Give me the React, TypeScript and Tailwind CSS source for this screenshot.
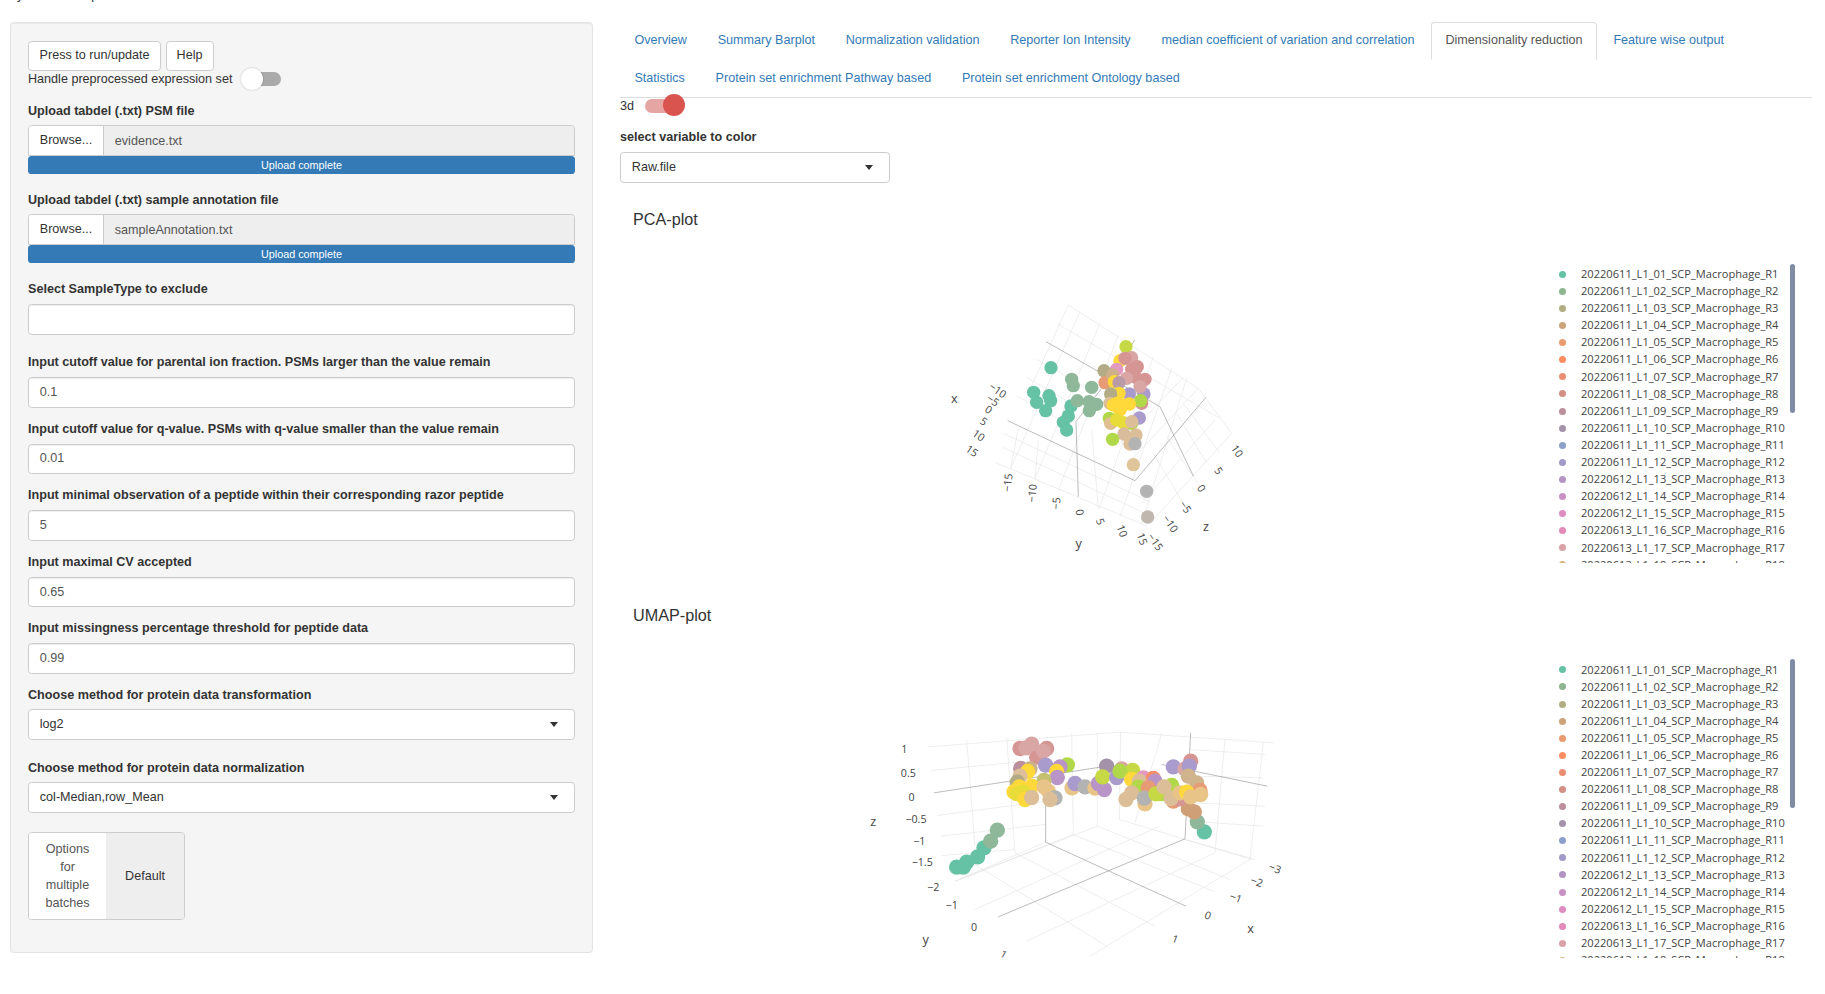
import React from "react";

type P = [number, number, string];
type L = [number, number, number, number];
type T = [number, number, string, number?];

const sans = "[font-family:'Liberation_Sans',Arial,sans-serif]";

const tabsA = ["Overview", "Summary Barplot", "Normalization validation", "Reporter Ion Intensity", "median coefficient of variation and correlation", "Dimensionality reduction", "Feature wise output"];
const tabsB = ["Statistics", "Protein set enrichment Pathway based", "Protein set enrichment Ontology based"];

const legendColors = ["#66c2a5", "#8db58f", "#b0ad82", "#cda37a", "#e99a6e", "#fc8d62", "#ea8d73", "#d38e85", "#bb8f9b", "#a492ab", "#8da0cb", "#a19ac7", "#b395c3", "#c991c3", "#df8dc1", "#e38ab8", "#dba1a8", "#d4b47d"];
const legendNames = legendColors.map((_, i) => {
  const n = i + 1;
  const d = n <= 12 ? "20220611" : n <= 15 ? "20220612" : "20220613";
  return `${d}_L1_${String(n).padStart(2, "0")}_SCP_Macrophage_R${n}`;
});

const T1 = "#66c2a5", G1 = "#8fb79a", K1 = "#b3ab86", O1 = "#e79b75", Y = "#ffd83a", Y2 = "#e8dc38", R = "#d59693", R2 = "#d9a5a5", V = "#a99bcc", V2 = "#b895c6", LG = "#b0d848", LG2 = "#c6d945", B = "#dcbf98", GR = "#b3b3b3", M = "#e39ac0", H = "#e8c488";

const pcaPoints: P[] = [
  [393, 233, T1], [341, 307, T1], [350, 337, T1], [387, 317, T1], [392, 332, T1], [377, 362, T1], [453, 348, T1], [445, 378, T1], [430, 397, T1], [440, 420, T1],
  [455, 268, G1], [460, 287, G1], [515, 292, G1], [472, 332, G1], [507, 335, G1], [530, 343, G1], [508, 362, G1],
  [618, 170, LG2], [600, 212, Y], [635, 203, R2], [615, 205, R], [590, 238, M], [552, 242, K1], [555, 278, O1], [578, 255, "#ccb08c"], [652, 230, R], [635, 238, R], [675, 268, R], [647, 262, R], [583, 275, Y], [620, 265, R2], [597, 278, "#b99ba8"], [672, 312, V], [660, 290, R2], [665, 340, R], [628, 312, V], [662, 332, LG], [597, 310, Y], [572, 312, K1], [570, 340, B],
  [658, 384, V], [568, 385, LG], [635, 400, LG], [590, 340, Y], [610, 345, Y], [628, 342, Y], [600, 360, Y], [580, 345, Y], [572, 400, "#e0c090"], [590, 390, Y2], [610, 398, Y2], [635, 395, B],
  [612, 432, "#d9bc9c"], [648, 435, B], [578, 448, LG], [630, 462, B], [645, 461, GR], [640, 524, "#e0c49a"], [680, 604, GR], [683, 681, "#c0b8ae"],
];

const pcaGrid: L[] = [
  [445, 45, 835, 295], [410, 100, 900, 385], [350, 208, 540, 318], [320, 262, 470, 350], [290, 318, 450, 405], [250, 430, 690, 635], [248, 472, 665, 665], [225, 517, 680, 708],
  [480, 65, 272, 535], [540, 100, 345, 565], [595, 135, 415, 600], [700, 200, 538, 655], [755, 235, 600, 680], [800, 265, 665, 700], [445, 45, 320, 320],
  [835, 295, 935, 430], [690, 700, 935, 430], [665, 640, 885, 390], [625, 520, 835, 295], [590, 470, 790, 262], [770, 370, 860, 520], [790, 340, 900, 490], [740, 440, 840, 590], [700, 490, 790, 640],
  [515, 420, 535, 655], [355, 450, 345, 565], [295, 415, 272, 535],
];

const pcaDark: L[] = [[378, 155, 720, 350], [263, 392, 645, 572], [645, 572, 858, 322], [720, 350, 820, 558], [468, 395, 475, 620], [468, 395, 545, 295], [644, 150, 620, 190]];

const pcaText: T[] = [
  [232, 312, "−10", 35], [218, 342, "−5", 35], [205, 370, "0", 35], [190, 405, "5", 35], [175, 447, "10", 35], [155, 494, "15", 35],
  [265, 588, "−15", -85], [338, 620, "−10", -85], [410, 650, "−5", -85], [478, 677, "0", 80], [540, 705, "5", 70], [605, 733, "10", 70], [665, 757, "15", 70],
  [705, 767, "−15", 55], [750, 712, "−10", 55], [795, 662, "−5", 55], [843, 606, "0", 55], [895, 553, "5", 55], [950, 494, "10", 55],
];

const umapPoints: P[] = [
  [290, 473, T1], [310, 473, T1], [320, 458, T1], [353, 442, T1], [372, 415, T1], [392, 395, G1], [412, 362, G1], [1033, 367, T1], [1012, 337, G1], [985, 298, "#cfa077"], [1003, 307, "#cfa077"],
  [480, 117, R], [530, 143, R], [498, 115, R2], [515, 104, R2], [560, 117, R], [550, 125, R2], [482, 177, "#bb8f9b"], [510, 178, "#ccb08c"], [503, 186, Y], [480, 200, B], [622, 166, LG], [600, 172, V2], [557, 167, V], [590, 186, Y], [592, 204, V2],
  [472, 218, K1], [552, 213, "#c5c070"], [515, 230, Y], [462, 247, Y], [478, 232, Y], [470, 252, Y2], [490, 248, Y2], [495, 270, Y], [515, 264, B], [552, 232, H], [565, 245, H], [585, 265, GR], [570, 270, B],
  [636, 235, H], [645, 222, V], [675, 232, GR], [705, 236, H], [715, 222, V2], [733, 240, V2], [740, 170, "#a492ab"], [728, 202, LG2], [785, 178, R2], [770, 204, V], [818, 183, LG2], [780, 185, LG], [815, 210, Y],
  [850, 205, M], [880, 207, "#fc8d62"], [838, 215, B], [885, 215, V2], [835, 233, LG], [865, 235, O1], [815, 250, B], [798, 270, B], [855, 283, H], [853, 266, GR], [940, 172, V], [935, 228, LG], [905, 252, LG], [888, 253, LG2], [912, 232, B], [940, 275, O1], [958, 268, R], [933, 267, B],
  [992, 155, R], [975, 178, R2], [988, 170, V], [985, 200, "#cfb48e"], [1010, 220, "#cfb48e"], [1020, 243, O1], [960, 250, H], [980, 248, Y], [992, 262, H], [1022, 255, H],
];

const umapGrid: L[] = [
  [205, 112, 780, 68], [780, 68, 1240, 100], [212, 183, 555, 150], [232, 318, 555, 275], [243, 380, 555, 345], [245, 438, 465, 420], [285, 515, 557, 398],
  [320, 90, 345, 410], [440, 83, 465, 430], [635, 72, 640, 375], [712, 70, 712, 350], [782, 65, 778, 330], [905, 72, 825, 340], [1095, 90, 1065, 430], [1210, 100, 1170, 450],
  [992, 120, 1215, 135], [1000, 200, 1210, 205], [1000, 280, 1215, 290], [985, 335, 1210, 350], [975, 390, 1185, 450],
  [465, 430, 885, 650], [345, 465, 740, 710], [640, 375, 1060, 545], [712, 350, 1110, 510], [778, 330, 1175, 450],
  [500, 695, 1065, 430], [690, 740, 1170, 450], [345, 600, 900, 350], [640, 375, 300, 510], [712, 350, 285, 515],
];

const umapDark: L[] = [[222, 250, 560, 198], [560, 198, 740, 170], [905, 165, 1222, 230], [557, 270, 557, 398], [557, 398, 978, 590], [975, 388, 415, 622], [975, 388, 992, 70]];

const umapText: T[] = [
  [133, 131, "1"], [145, 204, "0.5"], [155, 274, "0"], [168, 341, "−0.5"], [178, 408, "−1"], [187, 469, "−1.5"],
  [220, 546, "−2"], [275, 599, "−1"], [342, 666, "0"], [430, 746, "1", 30],
  [1245, 488, "−3", 20], [1190, 528, "−2", 20], [1127, 576, "−1", 20], [1043, 629, "0", 20], [945, 700, "1", 20],
];

function Scene({ id, dx, dy, r, clipH, grid, dark, points, text, titles }: { id: string; dx: number; dy: number; r: number; clipH: number; grid: L[]; dark: L[]; points: P[]; text: T[]; titles: [number, number, string][] }) {
  return (
    <svg width="930" height="340" viewBox="0 0 930 340" className="block shrink-0">
      <defs>
        <clipPath id={id}>
          <rect x="-300" y="-300" width="2000" height={clipH + 300} />
        </clipPath>
      </defs>
      <g transform={`translate(${dx} ${dy}) scale(0.33333)`} clipPath={`url(#${id})`}>
        {grid.map((l, i) => (
          <line key={i} x1={l[0]} y1={l[1]} x2={l[2]} y2={l[3]} stroke="#e2e2e2" strokeWidth="1.8" />
        ))}
        {dark.map((l, i) => (
          <line key={i} x1={l[0]} y1={l[1]} x2={l[2]} y2={l[3]} stroke="#777" strokeWidth="1.5" />
        ))}
        {points.map((p, i) => (
          <circle key={i} cx={p[0]} cy={p[1]} r={r} fill={p[2]} />
        ))}
        {text.map((t, i) => (
          <text key={i} x={t[0]} y={t[1]} fontSize="32" fill="#444" textAnchor="middle" fontFamily="'Open Sans',sans-serif" transform={t[3] ? `rotate(${t[3]} ${t[0]} ${t[1] - 10})` : undefined}>
            {t[2]}
          </text>
        ))}
        {titles.map((t, i) => (
          <text key={i} x={t[0]} y={t[1]} fontSize="38" fill="#444" textAnchor="middle" fontFamily="'Open Sans',sans-serif">
            {t[2]}
          </text>
        ))}
      </g>
    </svg>
  );
}

function Legend() {
  return (
    <div className="relative mt-[24px] ml-[5px] h-[299px] w-[245px] shrink-0">
      <div className="h-full overflow-hidden pt-[2.2px]">
        {legendNames.map((n, i) => (
          <div key={n} className="flex h-[17.1px] items-center">
            <span className="ml-[4px] h-[7px] w-[7px] shrink-0 rounded-full" style={{ backgroundColor: legendColors[i] }} />
            <span className="ml-[15px] whitespace-nowrap text-[11.1px] text-[#444] [font-family:'Open_Sans',sans-serif]">{n}</span>
          </div>
        ))}
      </div>
      <div className="absolute left-[235px] top-0 h-[149px] w-[5px] rounded-[3px] bg-[#808ba4]" />
    </div>
  );
}

function Caret() {
  return <span className="h-0 w-0 border-x-[4.5px] border-t-[5px] border-x-transparent border-t-[#333]" />;
}

function Label({ children, cls = "" }: { children: React.ReactNode; cls?: string }) {
  return <div className={`h-[18px] text-[12.6px] font-bold leading-[18px] text-[#333] ${cls}`}>{children}</div>;
}

function TextInput({ value, cls = "" }: { value: string; cls?: string }) {
  return (
    <div className={`flex h-[30.6px] items-center rounded-[3.6px] border border-[#ccc] bg-white px-[10.8px] text-[12.6px] text-[#555] shadow-[inset_0_1px_1px_rgba(0,0,0,0.075)] ${cls}`}>
      {value}
    </div>
  );
}

function Select({ value, cls = "" }: { value: string; cls?: string }) {
  return (
    <div className={`flex h-[30.6px] items-center justify-between rounded-[3.6px] border border-[#ccc] bg-white pl-[10.8px] pr-[16px] text-[12.6px] text-[#333] ${cls}`}>
      <span>{value}</span>
      <Caret />
    </div>
  );
}

function FileInput({ name, cls = "" }: { name: string; cls?: string }) {
  return (
    <div className={cls}>
      <div className="flex h-[31px] overflow-hidden rounded-t-[3.6px] border border-[#ccc] text-[12.6px]">
        <div className="flex w-[75px] shrink-0 items-center justify-center border-r border-[#ccc] bg-white pb-[1px] text-[#333]">Browse...</div>
        <div className="flex flex-1 items-center bg-[#eee] pl-[10.8px] pt-[1px] text-[#555]">{name}</div>
      </div>
      <div className="flex h-[18px] items-center justify-center rounded-[3.6px] bg-[#337ab7] text-[10.8px] text-white">Upload complete</div>
    </div>
  );
}

function Tab({ label, active, h }: { label: string; active?: boolean; h: string }) {
  return (
    <div className={`mr-[2px] whitespace-nowrap rounded-t-[3.6px] border px-[13.4px] pt-[8px] text-[12.6px] leading-[18px] ${h} ${active ? "border-[#ddd] border-b-transparent bg-white text-[#555]" : "border-transparent text-[#337ab7]"}`}>
      {label}
    </div>
  );
}

export default function App() {
  return (
    <div className={`h-[994px] w-[1825px] overflow-hidden bg-white ${sans}`}>
      <div className="h-[22px] overflow-hidden pl-[10px]">
        <div className="-mt-[14px] text-[12.6px] leading-[18px] text-[#333]">by Lukas Gamp</div>
      </div>
      <div className="flex items-start">
        <aside className="ml-[10px] h-[931px] w-[583px] shrink-0 rounded-[3.6px] border border-[#e3e3e3] bg-[#f5f5f5] px-[17px] pt-[17.5px] shadow-[inset_0_1px_1px_rgba(0,0,0,0.05)]">
          <div className="flex gap-[4.5px] text-[12.6px] text-[#333]">
            <div className="flex h-[30px] w-[133px] items-center justify-center rounded-[3.6px] border border-[#ccc] bg-white">Press to run/update</div>
            <div className="flex h-[30px] w-[48px] items-center justify-center rounded-[3.6px] border border-[#ccc] bg-white">Help</div>
          </div>
          <div className="flex h-[17px] items-center text-[12.6px] text-[#333]">
            <span>Handle preprocessed expression set</span>
            <span className="relative ml-[9px] block h-[14px] w-[40px]">
              <span className="absolute right-0 top-[-0.5px] h-[14px] w-[30px] rounded-full bg-[#aaa]" />
              <span className="absolute left-0 top-[-4.5px] h-[22px] w-[22px] rounded-full bg-white shadow-[0_0_2px_rgba(0,0,0,0.25)]" />
            </span>
          </div>

          <Label cls="mt-[14.5px]">Upload tabdel (.txt) PSM file</Label>
          <FileInput name="evidence.txt" cls="mt-[5px]" />
          <Label cls="mt-[17px]">Upload tabdel (.txt) sample annotation file</Label>
          <FileInput name="sampleAnnotation.txt" cls="mt-[5.4px]" />
          <Label cls="mt-[17px]">Select SampleType to exclude</Label>
          <TextInput value="" cls="mt-[6px]" />

          <Label cls="mt-[18px]">Input cutoff value for parental ion fraction. PSMs larger than the value remain</Label>
          <TextInput value="0.1" cls="mt-[6px]" />
          <Label cls="mt-[12px]">Input cutoff value for q-value. PSMs with q-value smaller than the value remain</Label>
          <TextInput value="0.01" cls="mt-[6px]" />
          <Label cls="mt-[12px]">Input minimal observation of a peptide within their corresponding razor peptide</Label>
          <TextInput value="5" cls="mt-[6px]" />
          <Label cls="mt-[12px]">Input maximal CV accepted</Label>
          <TextInput value="0.65" cls="mt-[6px]" />
          <Label cls="mt-[12px]">Input missingness percentage threshold for peptide data</Label>
          <TextInput value="0.99" cls="mt-[6px]" />

          <Label cls="mt-[12px]">Choose method for protein data transformation</Label>
          <Select value="log2" cls="mt-[5.5px]" />
          <Label cls="mt-[18.8px]">Choose method for protein data normalization</Label>
          <Select value="col-Median,row_Mean" cls="mt-[5.5px]" />

          <div className="mt-[19.5px] flex h-[88px] w-[157px] overflow-hidden rounded-[3.6px] border border-[#ccc] text-[12.6px] leading-[18px]">
            <div className="flex w-[77px] items-center justify-center bg-white text-center text-[#555]">
              Options<br />for<br />multiple<br />batches
            </div>
            <div className="flex flex-1 items-center justify-center bg-[#eee] text-[#333]">Default</div>
          </div>
        </aside>

        <main className="ml-[27px] w-[1195px] shrink-0">
          <div className="w-[1192px] border-b border-[#ddd]">
            <div className="flex">
              {tabsA.map((t) => (
                <Tab key={t} label={t} h="h-[38px]" active={t === "Dimensionality reduction"} />
              ))}
            </div>
            <div className="flex">
              {tabsB.map((t) => (
                <Tab key={t} label={t} h="h-[37px]" />
              ))}
            </div>
          </div>

          <div className="flex h-[17px] items-center text-[12.6px] text-[#333]">
            <span>3d</span>
            <span className="relative ml-[11px] block h-[14px] w-[40px]">
              <span className="absolute left-0 top-[-1px] h-[14px] w-[30px] rounded-full bg-[#e5a5a3]" />
              <span className="absolute right-0 top-[-5.5px] h-[22px] w-[22px] rounded-full bg-[#d9534f]" />
            </span>
          </div>

          <Label cls="mt-[13px]">select variable to color</Label>
          <Select value="Raw.file" cls="mt-[6px] w-[270px]" />

          <h4 className="ml-[13px] mt-[27px] h-[18px] text-[16.2px] font-normal leading-[18px] text-[#333]">PCA-plot</h4>
          <div className="mt-[12px] flex">
            <Scene id="pca" dx={300} dy={50} r={20} clipH={900} grid={pcaGrid} dark={pcaDark} points={pcaPoints} text={pcaText} titles={[[103, 338, "x"], [476, 773, "y"], [858, 722, "z"]]} />
            <Legend />
          </div>

          <h4 className="ml-[13px] mt-[26.5px] h-[18px] text-[16.2px] font-normal leading-[18px] text-[#333]">UMAP-plot</h4>
          <div className="mt-[11px] flex">
            <Scene id="umap" dx={240} dy={74.5} r={23} clipH={744} grid={umapGrid} dark={umapDark} points={umapPoints} text={umapText} titles={[[40, 351, "z"], [197, 705, "y"], [1172, 671, "x"]]} />
            <Legend />
          </div>
        </main>
      </div>
    </div>
  );
}
